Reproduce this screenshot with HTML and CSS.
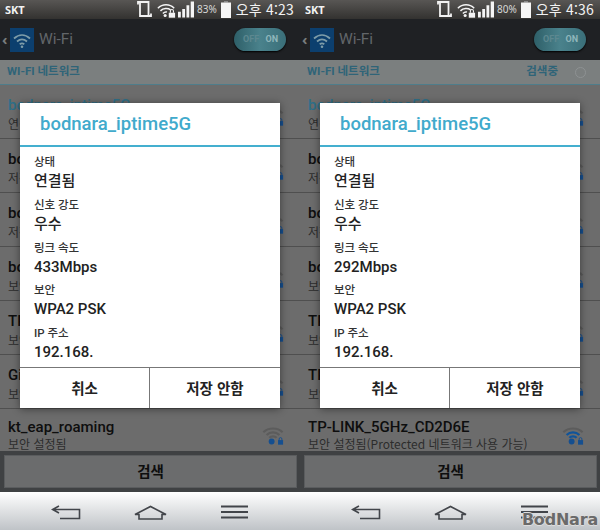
FILE: index.html
```html
<!DOCTYPE html>
<html lang="ko">
<head>
<meta charset="utf-8">
<title>Wi-Fi</title>
<link rel="stylesheet" href="styles.css">
</head>
<body>
<svg class="defs" width="0" height="0">
  <defs>
    <symbol id="rotate" viewBox="0 0 17 17">
      <path d="M3 1h8.500v14H3zM3 1H1v2.500M11.500 15H14v-2.500" fill="none" stroke="#f2f2f2" stroke-width="1.800"/>
    </symbol>
    <symbol id="wifilock" viewBox="0 0 21 17">
      <g fill="none" stroke="#f4f4f4" stroke-width="1.700">
        <path d="M1 6.500C6 1.500 14 1.500 19 6.500"/>
        <path d="M3.800 9.500C7 6.300 12 6.300 15 8.300"/>
        <path d="M6.500 12.300C8 10.800 10 10.500 11 10.800"/>
      </g>
      <circle cx="9" cy="14.500" r="1.700" fill="#f4f4f4"/>
      <path d="M13 11.500h7v5.500h-7z" fill="#f4f4f4"/>
      <path d="M14.800 11.500V9.700a1.700 1.700 0 0 1 3.400 0v1.800" fill="none" stroke="#f4f4f4" stroke-width="1.200"/>
    </symbol>
    <symbol id="bars" viewBox="0 0 17 17">
      <path d="M0 11h3v6H0zM4.500 8h3v9h-3zM9 4h3v13H9zM13.500 0h3.500v17h-3.500z" fill="#f4f4f4"/>
    </symbol>
    <symbol id="battery" viewBox="0 0 10 17">
      <path d="M3 0h4v1.500H3z" fill="#8a8a8a"/>
      <path d="M0 1.500h10V17H0z" fill="#f6f6f6"/>
    </symbol>
    <symbol id="appwifi" viewBox="0 0 24 24">
      <rect width="24" height="24" fill="#0c3f6e"/>
      <g fill="none" stroke="#7d9ca8" stroke-width="1.800">
        <path d="M4 10.500C9 6 15 6 20 10.500"/>
        <path d="M7 13.500C10 11 14 11 17 13.500"/>
        <path d="M9.700 16.300C11 15.300 13 15.300 14.300 16.300"/>
      </g>
      <circle cx="12" cy="18.800" r="1.300" fill="#7d9ca8"/>
    </symbol>
    <symbol id="sig" viewBox="0 0 24 20">
      <g fill="none" stroke-width="2.400">
        <path class="arc-a" d="M1.500 6.500C7 1 17 1 22.500 6.500"/>
        <path class="arc-b" d="M5 9.500C9 5.500 15 5.500 19 9.500"/>
        <path class="arc-c" d="M8 12.500C10 10.500 14 10.500 16 12.500"/>
      </g>
      <circle class="sig-dot" cx="10.500" cy="16.500" r="3.200"/>
      <path class="sig-dot" d="M17.500 15h5.500v5h-5.500z"/>
      <path d="M18.700 15v-1.200a1.500 1.500 0 0 1 3 0V15" fill="none" class="sig-hasp" stroke-width="1"/>
    </symbol>
    <symbol id="back" viewBox="0 0 30 15">
      <path d="M8 1 1.500 4.500 8 8M2 4.500h26.500v9H9" fill="none" stroke="#42454a" stroke-width="1.600"/>
    </symbol>
    <symbol id="home" viewBox="0 0 33 15">
      <path d="M1 9.500 16.500 1.500 32 9.500h-4v4.500H5V9.500z" fill="none" stroke="#42454a" stroke-width="1.600"/>
    </symbol>
    <symbol id="menu" viewBox="0 0 27 14">
      <path d="M0 1.500h27M0 7h27M0 12.500h27" fill="none" stroke="#42454a" stroke-width="1.900"/>
    </symbol>
  </defs>
</svg>

<main class="screens">

  <section class="phone">
    <header class="status">
      <span class="carrier">SKT</span>
      <span class="status-icons">
        <svg class="ic-rotate"><use href="#rotate"/></svg>
        <svg class="ic-wifi"><use href="#wifilock"/></svg>
        <svg class="ic-bars"><use href="#bars"/></svg>
        <span class="pct">83%</span>
        <svg class="ic-batt"><use href="#battery"/></svg>
        <span class="clock">오후 4:23</span>
      </span>
    </header>
    <div class="actionbar">
      <span class="chev">‹</span>
      <svg class="appicon"><use href="#appwifi"/></svg>
      <span class="apptitle">Wi-Fi</span>
      <span class="toggle"><span class="off">OFF</span><span class="on">ON</span></span>
    </div>
    <div class="section"><span>WI-FI 네트워크</span></div>
    <ul class="list">
      <li class="row"><div class="txt"><b class="name cur">bodnara_iptime5G</b><span class="sub">연결됨</span></div><svg class="sig strong"><use href="#sig"/></svg></li>
      <li class="row"><div class="txt"><b class="name">bodnara_2G</b><span class="sub">저장됨</span></div><svg class="sig weak"><use href="#sig"/></svg></li>
      <li class="row"><div class="txt"><b class="name">bodnara_iptime</b><span class="sub">저장됨</span></div><svg class="sig weak"><use href="#sig"/></svg></li>
      <li class="row"><div class="txt"><b class="name">bodnara_ap</b><span class="sub">보안 설정됨</span></div><svg class="sig strong"><use href="#sig"/></svg></li>
      <li class="row"><div class="txt"><b class="name">TP-LINK</b><span class="sub">보안 설정됨</span></div><svg class="sig strong"><use href="#sig"/></svg></li>
      <li class="row"><div class="txt"><b class="name">GiGA WiFi</b><span class="sub">보안 설정됨</span></div><svg class="sig weak"><use href="#sig"/></svg></li>
      <li class="row tail"><div class="txt"><b class="name">kt_eap_roaming</b><span class="sub">보안 설정됨</span></div><svg class="sig weak"><use href="#sig"/></svg></li>
    </ul>
    <div class="scanbar"><button class="scan" type="button">검색</button></div>
    <nav class="softkeys">
      <svg class="k-back"><use href="#back"/></svg>
      <svg class="k-home"><use href="#home"/></svg>
      <svg class="k-menu"><use href="#menu"/></svg>
    </nav>
    <div class="dialog">
      <h2 class="dlg-title">bodnara_iptime5G</h2>
      <dl class="dlg-body">
        <dt>상태</dt><dd>연결됨</dd>
        <dt>신호 강도</dt><dd>우수</dd>
        <dt>링크 속도</dt><dd>433Mbps</dd>
        <dt>보안</dt><dd>WPA2 PSK</dd>
        <dt>IP 주소</dt><dd>192.168.</dd>
      </dl>
      <div class="dlg-actions"><button type="button">취소</button><button type="button">저장 안함</button></div>
    </div>
  </section>

  <section class="phone">
    <header class="status">
      <span class="carrier">SKT</span>
      <span class="status-icons">
        <svg class="ic-rotate"><use href="#rotate"/></svg>
        <svg class="ic-wifi"><use href="#wifilock"/></svg>
        <svg class="ic-bars"><use href="#bars"/></svg>
        <span class="pct">80%</span>
        <svg class="ic-batt"><use href="#battery"/></svg>
        <span class="clock">오후 4:36</span>
      </span>
    </header>
    <div class="actionbar">
      <span class="chev">‹</span>
      <svg class="appicon"><use href="#appwifi"/></svg>
      <span class="apptitle">Wi-Fi</span>
      <span class="toggle"><span class="off">OFF</span><span class="on">ON</span></span>
    </div>
    <div class="section"><span>WI-FI 네트워크</span><span class="scanning">검색중<i class="spinner"></i></span></div>
    <ul class="list">
      <li class="row"><div class="txt"><b class="name cur">bodnara_iptime5G</b><span class="sub">연결됨</span></div><svg class="sig strong"><use href="#sig"/></svg></li>
      <li class="row"><div class="txt"><b class="name">bodnara_2G</b><span class="sub">저장됨</span></div><svg class="sig weak"><use href="#sig"/></svg></li>
      <li class="row"><div class="txt"><b class="name">bodnara_iptime</b><span class="sub">저장됨</span></div><svg class="sig weak"><use href="#sig"/></svg></li>
      <li class="row"><div class="txt"><b class="name">bodnara_ap</b><span class="sub">보안 설정됨</span></div><svg class="sig strong"><use href="#sig"/></svg></li>
      <li class="row"><div class="txt"><b class="name">TP-LINK</b><span class="sub">보안 설정됨</span></div><svg class="sig strong"><use href="#sig"/></svg></li>
      <li class="row"><div class="txt"><b class="name">TP-LINK</b><span class="sub">보안 설정됨</span></div><svg class="sig strong"><use href="#sig"/></svg></li>
      <li class="row tail"><div class="txt"><b class="name">TP-LINK_5GHz_CD2D6E</b><span class="sub">보안 설정됨(Protected 네트워크 사용 가능)</span></div><svg class="sig strong"><use href="#sig"/></svg></li>
    </ul>
    <div class="scanbar"><button class="scan" type="button">검색</button></div>
    <nav class="softkeys">
      <svg class="k-back"><use href="#back"/></svg>
      <svg class="k-home"><use href="#home"/></svg>
      <svg class="k-menu"><use href="#menu"/></svg>
    </nav>
    <div class="dialog">
      <h2 class="dlg-title">bodnara_iptime5G</h2>
      <dl class="dlg-body">
        <dt>상태</dt><dd>연결됨</dd>
        <dt>신호 강도</dt><dd>우수</dd>
        <dt>링크 속도</dt><dd>292Mbps</dd>
        <dt>보안</dt><dd>WPA2 PSK</dd>
        <dt>IP 주소</dt><dd>192.168.</dd>
      </dl>
      <div class="dlg-actions"><button type="button">취소</button><button type="button">저장 안함</button></div>
    </div>
    <span class="watermark">BodNara</span>
  </section>

</main>
</body>
</html>
```

FILE: styles.css
```css
* { box-sizing: border-box; }
html, body { margin: 0; padding: 0; }
body {
  width: 600px;
  height: 530px;
  overflow: hidden;
  background: #222;
  font-family: Roboto, "Noto Sans CJK KR", sans-serif;
  color: #111;
}
.defs { position: absolute; }
svg { display: block; }
.screens { display: flex; width: 600px; height: 530px; }
.phone {
  position: relative;
  width: 300px;
  height: 530px;
  display: flex;
  flex-direction: column;
  overflow: hidden;
  background: #6c6c6c;
}

/* status bar */
.status {
  flex: 0 0 19px;
  display: flex;
  align-items: center;
  justify-content: space-between;
  padding: 0 6px 0 5px;
  background: linear-gradient(#585654, #333230);
  color: #f2f2f2;
}
.carrier { font: 700 11px/19px "Noto Sans", sans-serif; }
.status-icons { display: flex; align-items: center; }
.ic-rotate { width: 17px; height: 17px; margin-right: 3px; }
.ic-wifi { width: 19px; height: 16px; margin-right: 2px; }
.ic-bars { width: 16px; height: 17px; margin-right: 3px; }
.pct { font: 400 10px/19px "Noto Sans", sans-serif; color: #d8d8d8; margin-right: 4px; }
.ic-batt { width: 10px; height: 17px; margin-right: 5px; }
.clock { font: 400 14px/19px "Noto Sans CJK KR", sans-serif; letter-spacing: .2px; }

/* action bar */
.actionbar {
  flex: 0 0 41px;
  display: flex;
  align-items: center;
  padding-left: 2px;
  background: #1f2124;
}
.chev { width: 8px; font: 700 15px/1 "Noto Sans", sans-serif; color: #777b7d; }
.appicon { width: 24px; height: 24px; margin-right: 5px; }
.apptitle { font: 400 15.500px/1 Roboto, sans-serif; color: #62666a; }
.toggle {
  margin-left: auto;
  margin-right: 14px;
  width: 52px;
  height: 23px;
  border-radius: 12px;
  display: flex;
  align-items: center;
  justify-content: space-between;
  padding: 0 8px 0 9px;
  font: 700 9px/1 Roboto, sans-serif;
  background: linear-gradient(90deg, #2e5f68, #4a828c 50%, #3a6f79);
  box-shadow: 0 1px 2px #000;
}
.off { color: #5d8890; }
.on { color: #8fb6bb; }

/* section header */
.section {
  flex: 0 0 25px;
  display: flex;
  align-items: center;
  justify-content: space-between;
  padding: 0 14px 0 7px;
  background: #7b7f7f;
  border-bottom: 1px solid #4f7d8b;
  font: 700 11.500px/1 Roboto, "Noto Sans CJK KR", sans-serif;
  color: #2f6478;
}
.scanning { display: flex; align-items: center; gap: 17px; }
.spinner { width: 11px; height: 11px; border-radius: 50%; border: 1px solid #8e9293; }

/* list */
.list { flex: 1 1 auto; list-style: none; margin: 0; padding: 0; overflow: hidden; }
.row {
  height: 54px;
  display: flex;
  align-items: center;
  justify-content: space-between;
  padding: 3px 16px 0 8px;
  border-bottom: 1px solid #4f4f4f;
}
.row.tail { height: 42px; border-bottom: 0; padding-top: 9px; align-items: flex-start; }
.txt { display: flex; flex-direction: column; min-width: 0; }
.name { font: 500 15px/20px Roboto, sans-serif; color: #0e0e0e; white-space: nowrap; }
.name.cur { color: #2f6f88; }
.sub { font: 400 12px/17px "Noto Sans CJK KR", sans-serif; color: #2c2c2c; white-space: nowrap; }
.tail .name { line-height: 19px; }
.tail .sub { line-height: 14px; }
.sig { flex: none; width: 22px; height: 19px; margin-top: 7px; }
.tail .sig { margin-top: 8px; }
.sig { --a: #5c5c5c; --b: #5c5c5c; --c: #5c5c5c; --d: #154f90; }
.sig.strong { --b: #10549a; --c: #10549a; }
.arc-a { stroke: var(--a); }
.arc-b { stroke: var(--b); }
.arc-c { stroke: var(--c); }
.sig-dot { fill: var(--d); }
.sig-hasp { stroke: var(--d); }

/* scan button */
.scanbar { flex: 0 0 41px; padding: 4px 3px 4px 4px; background: #3f4143; }
.scan {
  display: block;
  width: 100%;
  height: 33px;
  border: 1px solid #5a5c5e;
  background: #6b6c6d;
  color: #0e0e0e;
  font: 700 14.500px/1 "Noto Sans CJK KR", sans-serif;
  padding: 0;
}

/* soft keys */
.softkeys {
  flex: 0 0 38px;
  display: grid;
  grid-template-columns: 1fr 1fr 1fr;
  align-items: center;
  justify-items: center;
  padding: 2px 24px 0;
  background: linear-gradient(#ffffff, #bfc3c7);
}
.k-back { width: 30px; height: 15px; }
.k-home { width: 33px; height: 15px; }
.k-menu { width: 27px; height: 14px; }

/* dialog */
.dialog {
  position: absolute;
  left: 20px;
  top: 103px;
  width: 260px;
  height: 305px;
  display: flex;
  flex-direction: column;
  background: #fff;
  box-shadow: 0 1px 8px rgba(0, 0, 0, .45);
}
.dlg-title {
  flex: 0 0 44px;
  margin: 0;
  padding-left: 20px;
  border-bottom: 2px solid #44afcf;
  font: 500 18.500px/42px Roboto, sans-serif;
  color: #41aacc;
}
.dlg-body { flex: 1 1 0; min-height: 0; margin: 0; padding: 7px 14px 0; }
.dlg-body dt { font: 500 11.500px/16px Roboto, "Noto Sans CJK KR", sans-serif; color: #333; }
.dlg-body dd { margin: 0 0 4.800px; font: 500 15px/22px Roboto, "Noto Sans CJK KR", sans-serif; color: #222; }
.dlg-body dd:last-child { margin-bottom: 0; }
.dlg-actions { flex: 0 0 41px; display: grid; grid-template-columns: 129px 131px; border-top: 1px solid #777; }
.dlg-actions button {
  border: 0;
  background: #fff;
  padding: 0;
  color: #222;
  font: 700 14.500px/1 "Noto Sans CJK KR", sans-serif;
}
.dlg-actions button + button { border-left: 1px solid #777; }

/* watermark */
.watermark {
  position: absolute;
  right: 2px;
  bottom: 2px;
  font: 700 16px/1 "DejaVu Sans", sans-serif;
  letter-spacing: -.2px;
  color: #6a6a6a;
  text-shadow: 1px 0 #ddd, -1px 0 #ddd, 0 1px #ddd, 0 -1px #ddd;
}
```
